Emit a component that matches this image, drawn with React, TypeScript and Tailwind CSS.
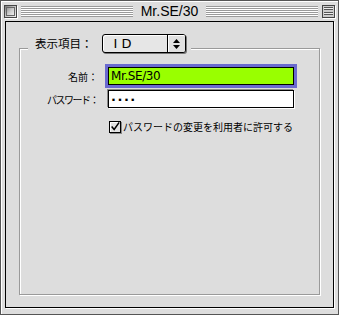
import React from "react";

const jp = "font-['Noto_Sans_CJK_JP','Noto_Sans',sans-serif]";

function CloseBox() {
  return (
    <div className="w-[13px] h-[13px] border border-[#444] shadow-[1px_1px_0_#fff] bg-[linear-gradient(135deg,#777_0%,#bbb_40%,#eee_100%)] p-[1px]">
      <div className="w-full h-full border border-[#666] bg-[linear-gradient(135deg,#999_0%,#ccc_50%,#eee_100%)]" />
    </div>
  );
}

function ShadeBox() {
  return (
    <div className="w-[13px] h-[13px] border border-[#444] shadow-[1px_1px_0_#fff] bg-[#ccc] flex flex-col justify-center gap-[2px] px-[1px]">
      <div className="h-[3px] border-y border-[#555] bg-[#eee]" />
      <div className="h-[3px] border-y border-[#555] bg-[#eee]" />
    </div>
  );
}

const stripes =
  "flex-1 h-[11px] bg-[repeating-linear-gradient(to_bottom,#9a9a9a_0px,#9a9a9a_1px,#ffffff_1px,#ffffff_2px)]";

export default function App() {
  return (
    <div className="w-[339px] h-[315px] bg-[#dddddd] border border-[#555] flex flex-col shadow-[inset_1px_1px_0_#fff]">
      {/* title bar */}
      <div className="h-[20px] flex items-center pl-[3px] pr-[3px] gap-[4px]">
        <CloseBox />
        <div className={stripes} />
        <span className="px-[4px] text-[14px] leading-none text-black font-['Liberation_Sans',sans-serif]">
          Mr.SE/30
        </span>
        <div className={stripes} />
        <ShadeBox />
      </div>

      {/* content */}
      <div className="flex-1 px-[4px] pb-[6px]">
        <div className="h-full border border-black shadow-[1px_1px_0_#fff] bg-[#dddddd] pt-[26px] px-[13px] pb-[12px]">
          <div className="relative h-full border border-[#9a9a9a] shadow-[inset_1px_1px_0_#fff,1px_1px_0_#fff]">
            {/* legend */}
            <div className="absolute left-[8px] top-[-15px] flex items-center gap-[9px] bg-[#dddddd] pl-[7px] pr-[4px]">
              <span className={`${jp} text-[11.5px] text-black`}>表示項目：</span>
              <div className="w-[85px] h-[20px] flex pr-[1px] pb-[1px]">
                <div className="flex-1 flex border border-black rounded-[3px] bg-[#e6e6e6] shadow-[1px_1px_0_#777,inset_1px_1px_0_#fff] overflow-hidden">
                  <span className="flex-1 text-[13px] leading-[17px] pl-[11px] text-black font-['DejaVu_Sans',sans-serif] whitespace-pre">I D</span>
                  <div className="w-[18px] border-l border-black flex items-center justify-center bg-[#e0e0e0] shadow-[inset_1px_1px_0_#fff]">
                    <svg width="9" height="12" viewBox="0 0 9 12">
                      <path d="M4.5 1 L8 5 H1 Z" fill="#000" />
                      <path d="M4.5 11 L8 7 H1 Z" fill="#000" />
                    </svg>
                  </div>
                </div>
              </div>
            </div>

            {/* form */}
            <div className="grid grid-cols-[78px_186px] gap-x-[10px] items-center pt-[18px]">
              <span className={`${jp} text-[10px] text-black text-right`}>名前：</span>
              <div className="h-[18px] border border-black bg-[#99ff00] shadow-[0_0_0_3px_#6a6acf] flex items-center pl-[2px]">
                <span className="text-[12px] leading-none text-black font-['DejaVu_Sans','Liberation_Sans',sans-serif] tracking-[-0.4px]">Mr.SE/30</span>
              </div>
              <span className={`${jp} text-[10px] text-black text-right mt-[5px] tracking-[-1.5px]`}>パスワード：</span>
              <div className="h-[18px] mt-[5px] border border-black bg-white shadow-[1px_1px_0_#fff,-1px_-1px_0_#888] flex items-center pl-[2px]">
                <span className="text-[13px] font-bold leading-none text-black tracking-[1.5px] font-['DejaVu_Sans',sans-serif]">····</span>
              </div>
              <div />
              <div className="flex items-center gap-[2px] mt-[11px] ml-[1px]">
                <div className="w-[12px] h-[12px] border border-black bg-[#e4e4e4] shadow-[inset_1px_1px_0_#fff,1px_1px_0_#888] flex items-center justify-center">
                  <svg width="12" height="12" viewBox="0 0 12 12">
                    <path d="M2 5.5 L5 9 L11 0.5" fill="none" stroke="#000" strokeWidth="1.8" />
                  </svg>
                </div>
                <span className={`${jp} text-[10px] text-black whitespace-nowrap`}>パスワードの変更を利用者に許可する</span>
              </div>
            </div>
          </div>
        </div>
      </div>
    </div>
  );
}
